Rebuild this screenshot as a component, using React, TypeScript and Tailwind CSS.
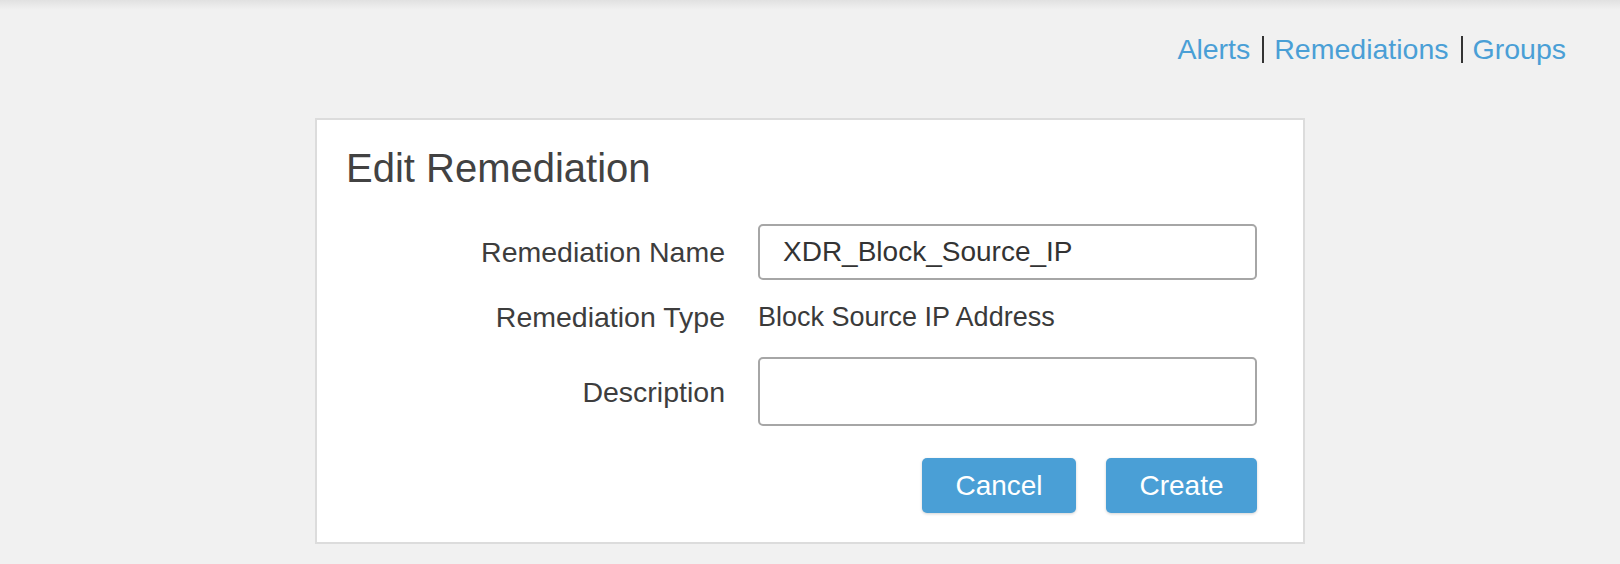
import React from 'react';

const NAV = ['Alerts', 'Remediations', 'Groups'];

function TopNav() {
  return (
    <nav className="flex justify-end pr-[54px] pt-[22px]">
      {NAV.map((label, i) => (
        <div key={label} className="flex items-center">
          {i > 0 && <span className="ml-[12px] mr-[10px] h-[27px] w-[2px] bg-[#333333]" />}
          <a href="#" className="text-[28.5px] leading-[34px] text-[#4a9fd6]">
            {label}
          </a>
        </div>
      ))}
    </nav>
  );
}

function FormRow({ label, children, className = '' }: { label: string; children: React.ReactNode; className?: string }) {
  return (
    <div className={`flex items-center gap-[33px] ${className}`}>
      <label className="w-[379px] text-right text-[28.5px] leading-[34px] text-[#3d3d3d]">{label}</label>
      {children}
    </div>
  );
}

export default function App() {
  return (
    <div className="min-h-[564px] bg-[#f1f1f1] font-['Liberation_Sans',Arial,sans-serif]">
      <div className="h-[10px] bg-gradient-to-b from-[#e1e1e1] to-[#f1f1f1]" />
      <TopNav />

      <div className="mx-auto mt-[52px] w-[990px] border-2 border-[#dcdcdc] bg-white pb-[29px] pl-[29px] pr-[46px] pt-[24px]">
        <h2 className="text-[40px] leading-[48px] text-[#424242]">Edit Remediation</h2>

        <FormRow label="Remediation Name" className="mt-[32px]">
          <div className="flex h-[56px] w-[499px] items-center rounded-[5px] border-2 border-[#a6a6a6] pl-[23px] text-[28px] text-[#333333]">
            XDR_Block_Source_IP
          </div>
        </FormRow>

        <FormRow label="Remediation Type" className="mt-[20px]">
          <span className="text-[27px] leading-[34px] text-[#3a3a3a]">Block Source IP Address</span>
        </FormRow>

        <FormRow label="Description" className="mt-[23px]">
          <div className="h-[69px] w-[499px] rounded-[5px] border-2 border-[#a6a6a6]" />
        </FormRow>

        <div className="mt-[32px] flex justify-end gap-[30px]">
          <button className="h-[55px] w-[154px] rounded-[5px] bg-[#4a9fd6] text-[28px] text-white shadow-[0_1px_3px_rgba(0,0,0,0.18)]">
            Cancel
          </button>
          <button className="h-[55px] w-[151px] rounded-[5px] bg-[#4a9fd6] text-[28px] text-white shadow-[0_1px_3px_rgba(0,0,0,0.18)]">
            Create
          </button>
        </div>
      </div>
    </div>
  );
}
